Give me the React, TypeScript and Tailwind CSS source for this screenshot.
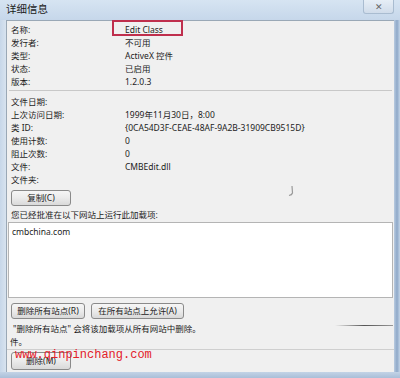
import React from "react";

const font = { fontFamily: '"Noto Sans", "Noto Sans CJK SC", sans-serif' };

const topRows: [string, string][] = [
  ["名称:", "Edit Class"],
  ["发行者:", "不可用"],
  ["类型:", "ActiveX 控件"],
  ["状态:", "已启用"],
  ["版本:", "1.2.0.3"],
];

const fileRows: [string, string][] = [
  ["文件日期:", ""],
  ["上次访问日期:", "1999年11月30日，8:00"],
  ["类 ID:", "{0CA54D3F-CEAE-48AF-9A2B-31909CB9515D}"],
  ["使用计数:", "0"],
  ["阻止次数:", "0"],
  ["文件:", "CMBEdit.dll"],
  ["文件夹:", ""],
];

function Row({ label, value, boxed }: { label: string; value: string; boxed?: boolean }) {
  return (
    <div className="flex h-[13px] items-center leading-none">
      <div className="w-[118px] shrink-0 pl-[4px]">{label}</div>
      <div className="relative">
        {value}
        {boxed && (
          <div className="absolute left-[-13px] top-[-6px] h-[16px] w-[71px] border-2 border-[#bf2f4d]" />
        )}
      </div>
    </div>
  );
}

function Btn({ children, w, h = 16 }: { children: React.ReactNode; w: string; h?: number }) {
  return (
    <div
      className={`${w} flex items-center justify-center rounded-[3px] border border-[#8a8a8a] bg-gradient-to-b from-[#f6f6f6] via-[#ebebeb] to-[#d9d9d9] text-[#222] leading-none`}
      style={{ height: h }}
    >
      {children}
    </div>
  );
}

export default function App() {
  return (
    <div className="relative h-[378px] w-[400px] overflow-hidden bg-[#c8d8ea] text-[8.5px] text-[#1c1c1c]" style={font}>
      {/* title bar */}
      <div className="flex h-[20px] items-start justify-between bg-gradient-to-b from-[#d6e4f2] to-[#c6d7ea]">
        <div className="pl-[6px] pt-[4px] text-[10.5px] leading-none text-[#1a1a1a]">详细信息</div>
        <div className="mr-[6px] flex h-[14px] w-[31px] items-center justify-center rounded-b-[3px] border border-t-0 border-[#a9bcd0] bg-gradient-to-b from-[#e6eef6] to-[#d0dcea] text-[9px] leading-none text-[#666]">
          ✕
        </div>
      </div>

      <div className="flex">
        <div className="w-[6px] bg-gradient-to-r from-[#c7d7e9] to-[#d8e3ef]" />
        {/* client area */}
        <div className="flex h-[352px] w-[388px] flex-col border-l border-t border-[#9aa8b6] bg-[#f0f0f0]">
          <div className="flex flex-col pt-[3px]">
            {topRows.map(([l, v], i) => (
              <Row key={l} label={l} value={v} boxed={i === 0} />
            ))}
          </div>
          <div className="mx-[2px] mt-[1px] h-[1px] bg-[#c8c8c8]" />
          <div className="mt-[5px] flex flex-col">
            {fileRows.map(([l, v]) => (
              <Row key={l} label={l} value={v} />
            ))}
          </div>
          <div className="mt-[3px] pl-[4px]">
            <Btn w="w-[60px]">复制(C)</Btn>
          </div>
          <div className="mt-[3px] flex h-[13px] items-center pl-[4px] leading-none">您已经批准在以下网站上运行此加载项:</div>
          <div className="ml-[1px] h-[76px] w-[385px] border border-[#b4b4b4] bg-white pl-[3px] pt-[5px] leading-none">
            cmbchina.com
          </div>
          <div className="mt-[5px] flex gap-[6px] pl-[4px]">
            <Btn w="w-[74px]">删除所有站点(R)</Btn>
            <Btn w="w-[93px]">在所有站点上允许(A)</Btn>
          </div>
          <div className="mt-[4px] flex h-[13px] items-center pl-[6px] leading-none">
            "删除所有站点" 会将该加载项从所有网站中删除。
          </div>
          <div className="flex h-[13px] items-center pl-[3px] leading-none">件。</div>
          <div className="h-[1px] bg-[#cfcfcf]" />
          <div className="mt-[2px] pl-[4px]">
            <Btn w="w-[60px]" h={18}>删除(M)</Btn>
          </div>
        </div>
        <div className="w-[6px] bg-gradient-to-r from-[#b9cbe0] via-[#8fa9c9] to-[#c3d4e7]" />
      </div>

      {/* bottom glass */}
      <div className="h-[6px] bg-gradient-to-b from-[#c3d3e6] to-[#a9bfd8]" />

      {/* small cursor artifact */}
      <svg className="absolute left-[287px] top-[185px]" width="8" height="12" viewBox="0 0 8 12">
        <path d="M5 1 L5.5 8 Q5 10 2 10.5" stroke="#999" strokeWidth="1.2" fill="none" />
      </svg>
      {/* streak artifact */}
      <div className="absolute left-[335px] top-[325px] h-[1px] w-[58px] bg-gradient-to-r from-transparent via-[#555] to-[#999]" />

      {/* watermark */}
      <div
        className="absolute left-[15px] top-[348px] text-[12px] leading-[14px] text-[#e3202a]"
        style={{ fontFamily: '"Liberation Mono", monospace' }}
      >
        www.qinpinchang.com
      </div>
    </div>
  );
}
